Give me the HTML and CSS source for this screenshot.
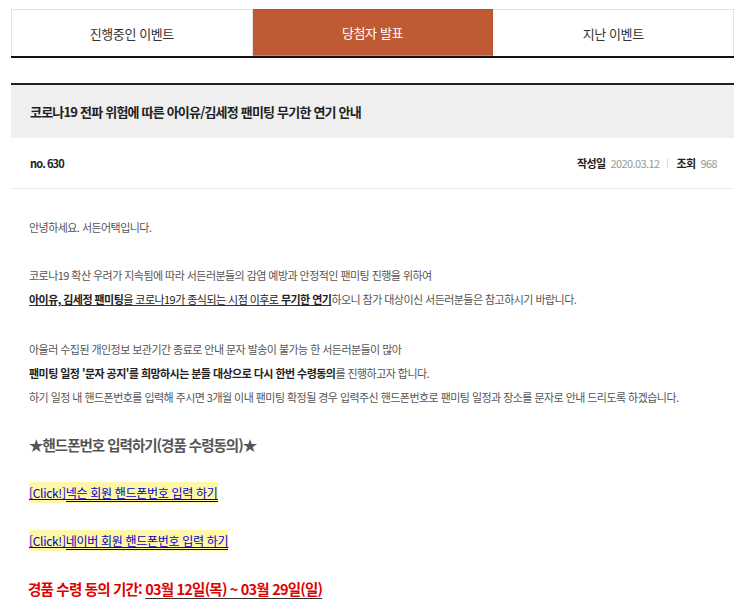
FILE: index.html
```html
<!DOCTYPE html>
<html lang="ko">
<head>
<meta charset="utf-8">
<title>당첨자 발표</title>
<link rel="stylesheet" href="styles.css">
</head>
<body>
<div class="wrap">
  <nav class="tabs">
    <a class="tab">진행중인 이벤트</a>
    <a class="tab active">당첨자 발표</a>
    <a class="tab">지난 이벤트</a>
  </nav>

  <div class="post">
    <h1 class="title">코로나19 전파 위험에 따른 아이유/김세정 팬미팅 무기한 연기 안내</h1>
    <div class="meta">
      <span class="no">no. 630</span>
      <div class="info">
        <b>작성일</b><span class="val">2020.03.12</span>
        <i class="sep"></i>
        <b>조회</b><span class="val">968</span>
      </div>
    </div>

    <div class="content">
      <p>안녕하세요. 서든어택입니다.</p>
      <p>코로나19 확산 우려가 지속됨에 따라 서든러분들의 감염 예방과 안정적인 팬미팅 진행을 위하여<br>
      <u><b>아이유, 김세정 팬미팅</b>을 코로나19가 종식되는 시점 이후로 <b>무기한 연기</b></u>하오니 참가 대상이신 서든러분들은 참고하시기 바랍니다.</p>
      <p class="p3">아울러 수집된 개인정보 보관기간 종료로 안내 문자 발송이 불가능 한 서든러분들이 많아<br>
      <b>팬미팅 일정 '문자 공지'를 희망하시는 분들 대상으로 다시 한번 수령동의</b>를 진행하고자 합니다.<br>
      하기 일정 내 핸드폰번호를 입력해 주시면 3개월 이내 팬미팅 확정될 경우 입력주신 핸드폰번호로 팬미팅 일정과 장소를 문자로 안내 드리도록 하겠습니다.</p>
      <h2 class="sub">★핸드폰번호 입력하기(경품 수령동의)★</h2>
      <p class="linkrow"><a class="hl">[Click!]<span class="ul">넥슨 회원 핸드폰번호 입력 하기</span></a></p>
      <p class="linkrow"><a class="hl">[Click!]<span class="ul">네이버 회원 핸드폰번호 입력 하기</span></a></p>
      <p class="period">경품 수령 동의 기간: <span class="date">03월 12일(목) ~ 03월 29일(일)</span></p>
    </div>
  </div>
</div>
</body>
</html>
```

FILE: styles.css
```css
* { box-sizing: border-box; }
html, body { margin: 0; padding: 0; background: #fff; }
body {
  font-family: "Noto Sans CJK KR", "Noto Sans", sans-serif;
  color: #555;
}
.wrap {
  width: 723px;
  margin-left: 11px;
  padding-top: 9px;
}
.tabs {
  display: flex;
  border-bottom: 2px solid #111;
}
.tab {
  flex: 1;
  height: 47px;
  display: flex;
  align-items: center;
  justify-content: center;
  font-size: 13px;
  color: #333;
  border: 1px solid #e3e3e3;
  border-bottom: 0;
  background: #fff;
  letter-spacing: -0.4px;
}
.tab + .tab { border-left: 0; }
.tab.active {
  background: #c05a34;
  color: #fff;
  border-color: #b5502c;
  border-bottom: 1px solid #e07a50;
}
.post {
  margin-top: 25px;
  border-top: 2px solid #222;
}
.title {
  margin: 0;
  background: #efefef;
  height: 53px;
  padding: 0 0 0 19px;
  display: flex;
  align-items: center;
  font-size: 13px;
  font-weight: 700;
  color: #222;
  letter-spacing: -0.8px;
}
.meta {
  height: 51px;
  display: flex;
  align-items: center;
  justify-content: space-between;
  padding: 0 17px 0 19px;
  border-bottom: 1px solid #ececec;
  font-size: 11px;
}
.no { color: #222; font-weight: 700; letter-spacing: -0.9px; }
.info { display: flex; align-items: center; letter-spacing: -0.6px; }
.info b { color: #222; font-weight: 700; margin-right: 5px; }
.val { color: #999; }
.sep {
  display: inline-block;
  width: 1px;
  height: 10px;
  background: #ddd;
  margin: 0 8px;
}
.content {
  padding: 26px 0 0 18px;
  font-size: 11px;
  line-height: 24px;
  letter-spacing: -0.55px;
  color: #555;
}
.content p { margin: 0 0 24px; }
.content p.p3 { margin-top: 26px; }
.content b { color: #222; font-weight: 700; }
.content u { color: #222; text-decoration-color: #333; }
.sub {
  margin: 0 0 24px;
  font-size: 14.5px;
  font-weight: 700;
  color: #555;
  line-height: 24px;
  letter-spacing: -1px;
}
.linkrow { margin: 0 0 24px -1px; }
.hl {
  background: #fff6a8;
  color: #0000cc;
  font-size: 12px;
  letter-spacing: -0.3px;
  text-decoration: underline;
  padding: 2px 0 2px;
}
.ul { box-shadow: 0 1px 0 #111; text-decoration: underline; }
.period {
  margin-left: -1px !important;
  color: #e00000;
  font-size: 14.5px;
  font-weight: 700;
  letter-spacing: -0.8px;
}
.date {
  text-decoration: underline;
  text-decoration-color: #333;
  text-underline-offset: 3px;
}
```
